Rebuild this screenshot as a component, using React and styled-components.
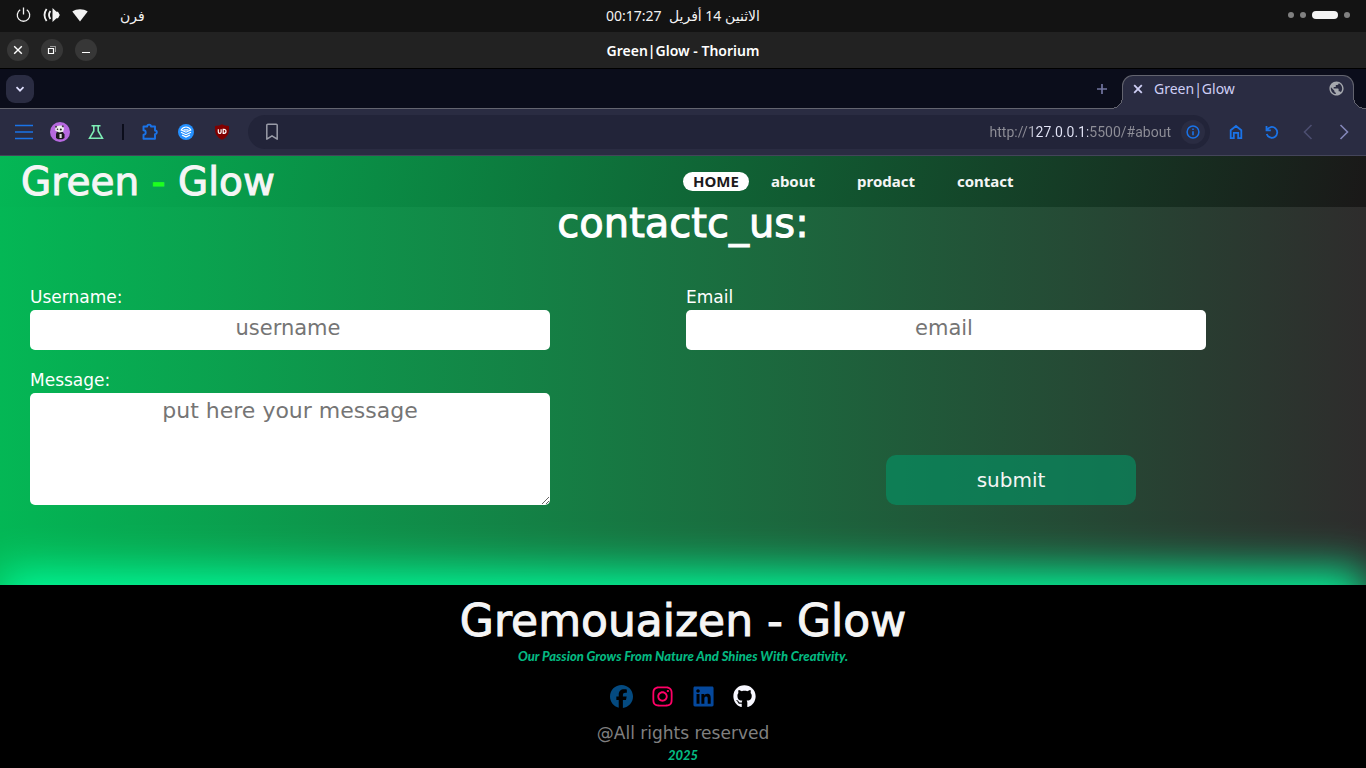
import React from "react";
import styled, { createGlobalStyle, css } from "styled-components";
import { FaFacebook, FaInstagram, FaLinkedin, FaGithub } from "react-icons/fa6";
import { MdPublic } from "react-icons/md";

const uiFont = `"Noto Sans", "Open Sans", "DejaVu Sans", sans-serif`;
const wideFont = `"DejaVu Sans", sans-serif`;

const GlobalStyle = createGlobalStyle`
  *, *::before, *::after { box-sizing: border-box; }
  body { margin: 0; background: #000; font-family: ${uiFont}; }
  button, input, textarea { font: inherit; color: inherit; border: 0; margin: 0; padding: 0; }
  button { background: none; cursor: pointer; }
  h1, h2, p, ul { margin: 0; padding: 0; }
  ul { list-style: none; }
  a { color: inherit; text-decoration: none; }
  svg { display: block; flex: none; }
`;

const Screen = styled.div`
  min-height: 100vh;
  display: flex;
  flex-direction: column;
`;

/* Desktop bar */
const SystemBar = styled.div`
  height: 32px;
  display: grid;
  grid-template-columns: 1fr auto 1fr;
  align-items: center;
  padding: 0 16px 2px;
  background: #131313;
  color: #f2f2f2;
  font-size: 14px;
`;

const StatusIcons = styled.div`
  display: flex;
  align-items: center;
  gap: 12px;
`;

const Language = styled.span`
  margin-left: 20px;
`;

const Workspaces = styled.div`
  display: flex;
  justify-content: flex-end;
  align-items: center;
  gap: 6px;
`;

const WorkspaceDot = styled.span`
  width: ${(p) => (p.$active ? 26 : 6)}px;
  height: ${(p) => (p.$active ? 8 : 6)}px;
  border-radius: 4px;
  background: ${(p) => (p.$active ? "#f2f2f2" : "#808080")};
`;

/* Window title bar */
const TitleBar = styled.div`
  height: 37px;
  display: grid;
  grid-template-columns: 1fr auto 1fr;
  align-items: center;
  padding: 0 7px;
  background: #222;
  border-bottom: 1px solid #000;
  color: #fff;
  font-size: 14px;
  font-weight: 600;
`;

const WindowControls = styled.div`
  display: flex;
  gap: 12px;
`;

const WindowButton = styled.button`
  width: 22px;
  height: 22px;
  border-radius: 50%;
  background: #373737;
  display: grid;
  place-items: center;
`;

/* Tabs */
const TabStrip = styled.div`
  height: 40px;
  display: flex;
  align-items: center;
  padding: 0 12px 0 6px;
  background: #0b0d1b;
  border-bottom: 1px solid #63646f;
`;

const TabMenu = styled.button`
  width: 28px;
  height: 28px;
  border-radius: 9px;
  background: #2a2c42;
  display: grid;
  place-items: center;
`;

const NewTab = styled.button`
  margin: 0 14px 0 auto;
`;

const Tab = styled.div`
  position: relative;
  align-self: flex-end;
  width: 232px;
  height: 34px;
  margin-bottom: -1px;
  display: flex;
  align-items: center;
  padding: 0 8px 8px 10px;
  background: #2a2c42;
  border: 1px solid #63646f;
  border-bottom: 0;
  border-radius: 11px 11px 0 0;
  color: #cfcff5;
  font-size: 14px;

  &::before,
  &::after {
    content: "";
    position: absolute;
    bottom: 0;
    width: 12px;
    height: 12px;
  }
  &::before {
    right: 100%;
    background: radial-gradient(circle at 0 0, #0b0d1b 11px, #63646f 11px 12px, #2a2c42 12px);
  }
  &::after {
    left: 100%;
    background: radial-gradient(circle at 100% 0, #0b0d1b 11px, #63646f 11px 12px, #2a2c42 12px);
  }
`;

const TabTitle = styled.span`
  flex: 1;
  margin-left: 11px;
`;

/* Toolbar */
const Toolbar = styled.div`
  height: 47px;
  display: flex;
  align-items: center;
  padding: 0 4px 0 6px;
  background: #2a2c42;
  border-bottom: 1px solid #44455a;
`;

const ToolButton = styled.button`
  width: 36px;
  height: 34px;
  display: grid;
  place-items: center;
  flex: none;
`;

const Divider = styled.span`
  width: 2px;
  height: 16px;
  margin: 0 8px;
  background: #0b0d1b;
`;

const AddressBar = styled.div`
  flex: 1;
  min-width: 0;
  height: 34px;
  margin: 0 8px;
  padding: 0 5px 0 17px;
  display: flex;
  align-items: center;
  gap: 10px;
  border-radius: 17px;
  background: #222439;
`;

const AddressInput = styled.input`
  flex: 1;
  min-width: 0;
  text-align: right;
  font-family: Roboto, sans-serif;
  font-size: 14px;
  line-height: 20px;
  outline: 0;
  color: transparent;
  background: linear-gradient(to left, #8f8f98 83px, #e4e6f8 83px 139px, #8f8f98 139px);
  background-clip: text;
  -webkit-background-clip: text;
`;

const InfoButton = styled.button`
  width: 24px;
  height: 24px;
  border-radius: 50%;
  background: #2a2c42;
  display: grid;
  place-items: center;
`;

/* Web page */
const Page = styled.div`
  flex: 1;
  display: flex;
  flex-direction: column;
  background: linear-gradient(to right, #04b755, #2e2c2c);
`;

const Header = styled.header`
  height: 51px;
  display: grid;
  grid-template-columns: 1fr 1fr;
  align-items: center;
  background: linear-gradient(100deg, #04b755, #1a1818);
  color: #f5f5f5;
`;

const displayText = css`
  font-family: ${wideFont};
  font-weight: 400;
  -webkit-text-stroke: 1px currentColor;
`;

const Brand = styled.h1`
  ${displayText}
  margin-left: 21px;
  font-size: 39px;
  line-height: 50px;
  white-space: nowrap;

  span { color: #1eff1e; }
`;

const NavList = styled.ul`
  display: flex;
  gap: 22px;

  li:first-child { margin-right: -10px; }
`;

const NavLink = styled.a`
  display: block;
  padding: 0 10px;
  border-radius: 10px;
  font-size: 15px;
  line-height: 19px;
  font-weight: 700;
  color: ${(p) => (p.$active ? "#1c1a1c" : "#f5f5f5")};
  background: ${(p) => (p.$active ? "#fff" : "transparent")};
`;

const Contact = styled.main`
  flex: 1;
  padding-bottom: 80px;
  font-family: ${wideFont};
  color: #fff;
`;

const ContactTitle = styled.h2`
  ${displayText}
  font-size: 40px;
  line-height: 32px;
  text-align: center;
`;

const ContactForm = styled.form`
  display: grid;
  grid-template-columns: 1fr 1fr;
  gap: 20px 6px;
  padding: 48px 30px 0;
`;

const Field = styled.div`
  display: flex;
  flex-direction: column;
  gap: 3px;
`;

const Label = styled.label`
  font-size: 17px;
  line-height: 20px;
`;

const boxStyle = css`
  width: 520px;
  max-width: 100%;
  border-radius: 5px;
  background: #fff;
  color: #222;
  text-align: center;

  &::placeholder { color: #757575; opacity: 1; }
`;

const TextInput = styled.input`
  ${boxStyle}
  height: 40px;
  padding: 0 4px 4px 0;
  font-size: 21px;
`;

const TextArea = styled.textarea`
  ${boxStyle}
  display: block;
  height: 112px;
  padding: 5px 0;
  font-size: 22px;
  line-height: 26px;
`;

const SubmitButton = styled.button`
  justify-self: center;
  align-self: end;
  width: 250px;
  height: 50px;
  border-radius: 10px;
  background: rgba(4, 146, 100, 0.64);
  color: #f5f5f5;
  font-size: 20px;
`;

const Footer = styled.footer`
  display: flex;
  flex-direction: column;
  align-items: center;
  padding: 12px 0 2px;
  background: #000;
  box-shadow: 0 -14px 40px #00fa9a;
  font-family: ${wideFont};
`;

const FooterBrand = styled.h2`
  ${displayText}
  font-size: 44px;
  line-height: 48px;
  color: #f5f5f5;
`;

const Accent = styled.p`
  font-family: Lato, sans-serif;
  font-size: 13px;
  line-height: 22px;
  font-weight: 900;
  font-style: italic;
  color: #04b880;
`;

const SocialList = styled.ul`
  display: flex;
  gap: 18px;
  padding: 18px 0 14px;
`;

const SocialLink = styled.a`
  display: block;
  color: ${(p) => p.$color};
`;

const Rights = styled.p`
  font-size: 17px;
  line-height: 22px;
  color: #808080;
`;

const stroke = { fill: "none", stroke: "currentColor" };
const blue = "#1a73e8";

const PowerIcon = () => (
  <svg width="15" height="16" viewBox="0 0 15 16" {...stroke} strokeWidth="1.3">
    <path d="M4.2 2.8a6.2 6.2 0 1 0 6.6 0M7.5 0.5v7" />
  </svg>
);
const VolumeIcon = () => (
  <svg width="17" height="16" viewBox="0 0 17 16" {...stroke} strokeWidth="1.8">
    <path d="M3.6 2Q-.6 8 3.6 14M7.4 4Q4.6 8 7.4 12" />
    <path d="M9.500 1 13.500 4.800H15L16.800 8 15 11.200h-1.500L9.500 15z" fill="currentColor" stroke="none" />
  </svg>
);
const WifiIcon = () => (
  <svg width="16" height="14" viewBox="0 0 16 14">
    <path fill="currentColor" d="M8 13.400.3 3.600C4.700.400 11.300.400 15.700 3.600z" />
  </svg>
);
const CloseIcon = ({ width = 1.6 }) => (
  <svg width="10" height="10" viewBox="0 0 10 10" {...stroke} strokeWidth={width}>
    <path d="m1.200 1.200 7.600 7.600M8.800 1.200 1.200 8.800" />
  </svg>
);
const RestoreIcon = () => (
  <svg width="10" height="10" viewBox="0 0 10 10" {...stroke}>
    <path d="M1.500 3.500h5v5h-5z" strokeWidth="1.200" />
    <path d="M3 1.500h5.500V7" opacity=".5" />
  </svg>
);
const MinimizeIcon = () => (
  <svg width="10" height="10" viewBox="0 0 10 10" {...stroke}>
    <path d="M1 7.500h8" />
  </svg>
);
const ChevronDown = () => (
  <svg width="10" height="10" viewBox="0 0 10 10" fill="none" stroke="#e0e0ff" strokeWidth="1.700">
    <path d="m1.500 3.200 3.500 3.500 3.500-3.500" />
  </svg>
);
const PlusIcon = () => (
  <svg width="12" height="12" viewBox="0 0 12 12" fill="none" stroke="#7376a0" strokeWidth="1.700">
    <path d="M6 1v10M1 6h10" />
  </svg>
);
const MenuIcon = () => (
  <svg width="18" height="16" viewBox="0 0 18 16" fill="none" stroke={blue} strokeWidth="1.700">
    <path d="M0 1.500h18M0 8h18M0 14.500h18" />
  </svg>
);
const AvatarIcon = () => (
  <svg width="20" height="20" viewBox="0 0 20 20">
    <circle cx="10" cy="10" r="10" fill="#b769e0" />
    <path d="M7 9.500h5.500l2 3v3.500l-2 1.200H8l-2-1.200v-4z" fill="#1b191d" />
    <path d="M5.500 5.500Q8 2.800 12.500 3.800L14 6.500l-.8 3.200-4 .9-4-2z" fill="#eee" />
    <path d="M9.500 12h2.200v4H9.500z" fill="#ddd" />
    <circle cx="6" cy="4.800" r="1" fill="#444" />
    <circle cx="12.800" cy="4.200" r="1" fill="#444" />
    <circle cx="7.500" cy="7.300" r=".8" fill="#222" />
    <circle cx="10.800" cy="7.500" r="1" fill="#222" />
  </svg>
);
const FlaskIcon = () => (
  <svg width="16" height="16" viewBox="0 0 16 16" fill="none" stroke="#7dedb5" strokeWidth="1.600">
    <path d="M3.500 1.800h9M5.800 2v5L1.600 14.200h12.800L10.200 7V2" />
  </svg>
);
const PuzzleIcon = () => (
  <svg width="18" height="18" viewBox="0 0 18 18" fill="none" stroke={blue} strokeWidth="1.900" strokeLinejoin="round">
    <path d="M2.500 3.500h3.700a1.900 1.900 0 0 1 3.800 0h4v4a1.700 1.700 0 0 1 0 3.600v4.600H2.500v-4a2.200 2.200 0 0 0 0-4.400z" />
  </svg>
);
const LayersIcon = () => (
  <svg width="16" height="16" viewBox="0 0 16 16" fill="none" stroke="#fff" strokeWidth="1.200">
    <circle cx="8" cy="8" r="8" fill="#2490ff" stroke="none" />
    <path d="M3.200 6Q5 3 8 3t4.800 3L8 8.200zM3 8.300l5 2.400 5-2.400M4 11l4 2 4-2M5.600 5.800h4.800" />
  </svg>
);
const ShieldIcon = () => (
  <svg width="16" height="16" viewBox="0 0 16 16">
    <path d="M8 .3Q10.500 2 15 2q.3 6-1.200 8.800Q12 14 8 15.800 4 14 2.200 10.800.7 8 1 2 5.500 2 8 .3z" fill="#800000" />
    <path d="M4.300 5.300v2.700a1.300 1.300 0 0 0 2.800 0V5.300M9.200 5.300v4h.8a1.900 1.900 0 0 0 0-4z" fill="none" stroke="#fff" strokeWidth="1.200" />
  </svg>
);
const BookmarkIcon = () => (
  <svg width="14" height="18" viewBox="0 0 14 18" fill="none" stroke="#9a9ca8" strokeWidth="1.500" strokeLinejoin="round">
    <path d="M2.800 1.300h8.400a1 1 0 0 1 1 1v13.900L7 12.800l-5.200 3.400V2.300a1 1 0 0 1 1-1z" />
  </svg>
);
const InfoIcon = () => (
  <svg width="14" height="14" viewBox="0 0 14 14" fill="none" stroke={blue} strokeWidth="1.500">
    <circle cx="7" cy="7" r="5.900" />
    <path d="M7 6.200v4M7 3.600V5" strokeWidth="1.600" />
  </svg>
);
const HomeIcon = () => (
  <svg width="14" height="16" viewBox="0 0 14 16" fill="none" stroke={blue} strokeWidth="1.800">
    <path d="M1.700 6.200 7 2l5.300 4.200v8H9.200V8.800H4.800v5.400H1.700z" />
  </svg>
);
const ReloadIcon = () => (
  <svg width="14" height="14" viewBox="0 0 14 14" fill="none" stroke={blue} strokeWidth="1.800">
    <path d="M1.500 1v4.300h4.300M2 5a5.400 5.400 0 1 1-.3 4" />
  </svg>
);
const ArrowIcon = ({ color, d }) => (
  <svg width="10" height="16" viewBox="0 0 10 16" fill="none" stroke={color} strokeWidth="1.600">
    <path d={d} />
  </svg>
);

const navItems = ["HOME", "about", "prodact", "contact"];
const socials = [
  { name: "Facebook", color: "#044a80", Icon: FaFacebook },
  { name: "Instagram", color: "#ff0066", Icon: FaInstagram },
  { name: "LinkedIn", color: "#05489c", Icon: FaLinkedin },
  { name: "GitHub", color: "#f8f8ff", Icon: FaGithub },
];

export default function App() {
  return (
    <Screen>
      <GlobalStyle />
      <SystemBar>
        <StatusIcons>
          <PowerIcon />
          <VolumeIcon />
          <WifiIcon />
          <Language lang="ar">فرن</Language>
        </StatusIcons>
        <span dir="rtl" lang="ar">الاثنين 14 أفريل &nbsp;00:17:27</span>
        <Workspaces>
          <WorkspaceDot />
          <WorkspaceDot />
          <WorkspaceDot $active />
          <WorkspaceDot />
        </Workspaces>
      </SystemBar>

      <TitleBar>
        <WindowControls>
          <WindowButton aria-label="Close"><CloseIcon width={1.4} /></WindowButton>
          <WindowButton aria-label="Restore"><RestoreIcon /></WindowButton>
          <WindowButton aria-label="Minimize"><MinimizeIcon /></WindowButton>
        </WindowControls>
        <span>Green|Glow - Thorium</span>
      </TitleBar>

      <TabStrip>
        <TabMenu aria-label="Search tabs"><ChevronDown /></TabMenu>
        <NewTab aria-label="New tab"><PlusIcon /></NewTab>
        <Tab>
          <button aria-label="Close tab"><CloseIcon width={1.8} /></button>
          <TabTitle>Green|Glow</TabTitle>
          <MdPublic size={17} color="#a5a8ae" />
        </Tab>
      </TabStrip>

      <Toolbar>
        <ToolButton aria-label="Menu"><MenuIcon /></ToolButton>
        <ToolButton aria-label="Profile"><AvatarIcon /></ToolButton>
        <ToolButton aria-label="Experiments"><FlaskIcon /></ToolButton>
        <Divider />
        <ToolButton aria-label="Extensions"><PuzzleIcon /></ToolButton>
        <ToolButton aria-label="Layers extension"><LayersIcon /></ToolButton>
        <ToolButton aria-label="Ad blocker"><ShieldIcon /></ToolButton>
        <AddressBar>
          <BookmarkIcon />
          <AddressInput aria-label="Address" defaultValue="http://127.0.0.1:5500/#about" />
          <InfoButton aria-label="Site information"><InfoIcon /></InfoButton>
        </AddressBar>
        <ToolButton aria-label="Home"><HomeIcon /></ToolButton>
        <ToolButton aria-label="Reload"><ReloadIcon /></ToolButton>
        <ToolButton aria-label="Back"><ArrowIcon color="#4c4e70" d="M8.500 1 1.500 8l7 7" /></ToolButton>
        <ToolButton aria-label="Forward"><ArrowIcon color="#8386b8" d="m1.500 1 7 7-7 7" /></ToolButton>
      </Toolbar>

      <Page>
        <Header>
          <Brand>Green <span>-</span> Glow</Brand>
          <nav>
            <NavList>
              {navItems.map((item, i) => (
                <li key={item}>
                  <NavLink href={`#${item.toLowerCase()}`} $active={i === 0}>{item}</NavLink>
                </li>
              ))}
            </NavList>
          </nav>
        </Header>
        <Contact>
          <ContactTitle>contactc_us:</ContactTitle>
          <ContactForm onSubmit={(e) => e.preventDefault()}>
            <Field>
              <Label htmlFor="username">Username:</Label>
              <TextInput id="username" placeholder="username" />
            </Field>
            <Field>
              <Label htmlFor="email">Email</Label>
              <TextInput id="email" type="email" placeholder="email" />
            </Field>
            <Field>
              <Label htmlFor="message">Message:</Label>
              <TextArea id="message" placeholder="put here your message" />
            </Field>
            <SubmitButton type="submit">submit</SubmitButton>
          </ContactForm>
        </Contact>
        <Footer>
          <FooterBrand>Gremouaizen - Glow</FooterBrand>
          <Accent>Our Passion Grows From Nature And Shines With Creativity.</Accent>
          <SocialList>
            {socials.map(({ name, color, Icon }) => (
              <li key={name}>
                <SocialLink href={`#${name.toLowerCase()}`} aria-label={name} $color={color}>
                  <Icon size={23} />
                </SocialLink>
              </li>
            ))}
          </SocialList>
          <Rights>@All rights reserved</Rights>
          <Accent>2025</Accent>
        </Footer>
      </Page>
    </Screen>
  );
}
